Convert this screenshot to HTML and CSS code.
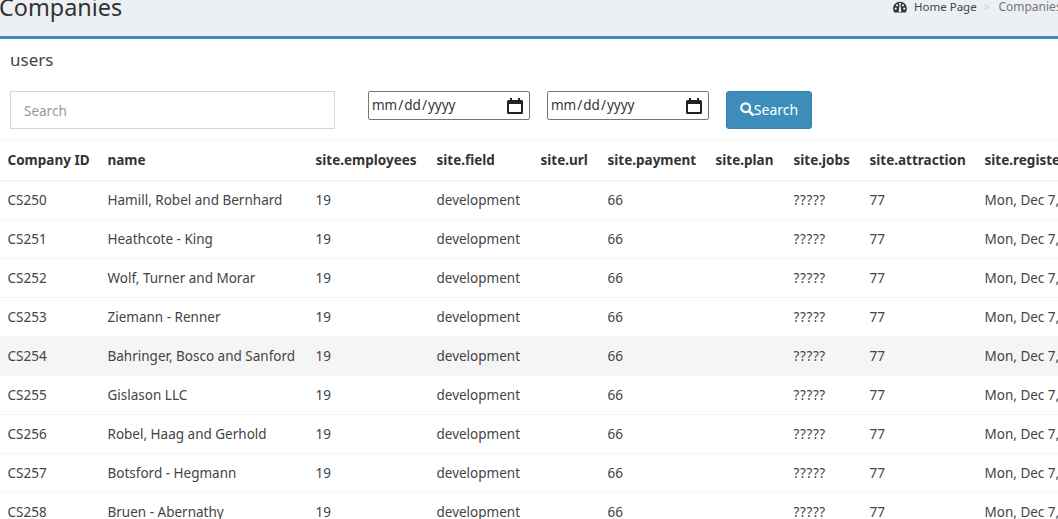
FILE: index.html
```html
<!DOCTYPE html>
<html lang="en">
<head>
    <meta charset="UTF-8">
    <meta name="viewport" content="width=device-width, initial-scale=1.0">
    <title>Companies</title>
    <link rel="stylesheet" href="styles.css">
</head>
<body>
    <header class="page-header">
        <h1 class="page-title">Companies</h1>
        <ol class="breadcrumb">
            <li class="crumb-link">
                <svg class="crumb-icon" viewBox="0 0 16 14" aria-hidden="true">
                    <path fill-rule="evenodd" d="M8 1C3.6 1 0 4.6 0 9c0 1.500.4 2.900 1.100 4 .2.300.5.500.8.500h12.200c.3 0 .6-.2.800-.5.700-1.100 1.100-2.500 1.100-4 0-4.400-3.600-8-8-8zM3 10.300a1.300 1.300 0 1 1 0-2.600 1.300 1.300 0 0 1 0 2.600zM4.600 6.300a1.300 1.300 0 1 1 0-2.600 1.300 1.300 0 0 1 0 2.600zM8 4.600a1.300 1.300 0 1 1 0-2.600 1.300 1.300 0 0 1 0 2.600zM13 10.300a1.300 1.300 0 1 1 0-2.600 1.300 1.300 0 0 1 0 2.600zM11.400 6.300a1.300 1.300 0 1 1 0-2.600 1.300 1.300 0 0 1 0 2.600zM9.500 11.200a1.600 1.600 0 1 1-2.800-.9L7.400 5h1.200l.7 5.300c.1.300.2.600.2.900z"/>
                </svg>
                Home Page
            </li>
            <li class="crumb-sep">&gt;</li>
            <li class="crumb-current">Companies</li>
        </ol>
    </header>

    <main class="box">
        <h3 class="box-title">users</h3>
        <form class="filters">
            <input class="search-input" type="text" placeholder="Search">
            <input class="date-input date-from" type="date">
            <input class="date-input date-to" type="date">
            <button class="search-btn" type="button">
                <svg class="search-icon" viewBox="0 0 14 14" aria-hidden="true">
                    <circle cx="5.700" cy="5.700" r="4.400" fill="none" stroke="#fff" stroke-width="2.200"/>
                    <path d="M9 9l3.800 3.800" stroke="#fff" stroke-width="2.600" stroke-linecap="round"/>
                </svg>Search
            </button>
        </form>

        <table class="data-table">
            <colgroup>
                <col class="c-id"><col class="c-name"><col class="c-emp"><col class="c-field"><col class="c-url">
                <col class="c-pay"><col class="c-plan"><col class="c-jobs"><col class="c-attr"><col class="c-reg">
            </colgroup>
            <thead>
                <tr>
                    <th>Company ID</th><th>name</th><th>site.employees</th><th>site.field</th><th>site.url</th>
                    <th>site.payment</th><th>site.plan</th><th>site.jobs</th><th>site.attraction</th><th>site.registered</th>
                </tr>
            </thead>
            <tbody>
                <tr><td>CS250</td><td>Hamill, Robel and Bernhard</td><td>19</td><td>development</td><td></td><td>66</td><td></td><td>?????</td><td>77</td><td>Mon, Dec 7, 2020</td></tr>
                <tr><td>CS251</td><td>Heathcote - King</td><td>19</td><td>development</td><td></td><td>66</td><td></td><td>?????</td><td>77</td><td>Mon, Dec 7, 2020</td></tr>
                <tr><td>CS252</td><td>Wolf, Turner and Morar</td><td>19</td><td>development</td><td></td><td>66</td><td></td><td>?????</td><td>77</td><td>Mon, Dec 7, 2020</td></tr>
                <tr><td>CS253</td><td>Ziemann - Renner</td><td>19</td><td>development</td><td></td><td>66</td><td></td><td>?????</td><td>77</td><td>Mon, Dec 7, 2020</td></tr>
                <tr class="is-hover"><td>CS254</td><td>Bahringer, Bosco and Sanford</td><td>19</td><td>development</td><td></td><td>66</td><td></td><td>?????</td><td>77</td><td>Mon, Dec 7, 2020</td></tr>
                <tr><td>CS255</td><td>Gislason LLC</td><td>19</td><td>development</td><td></td><td>66</td><td></td><td>?????</td><td>77</td><td>Mon, Dec 7, 2020</td></tr>
                <tr><td>CS256</td><td>Robel, Haag and Gerhold</td><td>19</td><td>development</td><td></td><td>66</td><td></td><td>?????</td><td>77</td><td>Mon, Dec 7, 2020</td></tr>
                <tr><td>CS257</td><td>Botsford - Hegmann</td><td>19</td><td>development</td><td></td><td>66</td><td></td><td>?????</td><td>77</td><td>Mon, Dec 7, 2020</td></tr>
                <tr><td>CS258</td><td>Bruen - Abernathy</td><td>19</td><td>development</td><td></td><td>66</td><td></td><td>?????</td><td>77</td><td>Mon, Dec 7, 2020</td></tr>
            </tbody>
        </table>
    </main>
</body>
</html>
```

FILE: styles.css
```css
html,
body {
    height: 100%;
    overflow: hidden;
}
body {
    margin: 0;
    background: #fff;
    color: #333;
    font-family: "Noto Sans", "Open Sans", sans-serif;
    font-size: 13.5px;
}
.page-header {
    display: flex;
    height: 36px;
    background: #ecf0f5;
    border-bottom: 3px solid #3c8dbc;
    overflow: hidden;
}
.page-title {
    margin: -8px 0 0 -1px;
    font-size: 23.4px;
    font-weight: 400;
    line-height: 30px;
    color: #333;
}
.breadcrumb {
    display: flex;
    flex: 0 0 165px;
    gap: 7px;
    margin: 0 0 0 auto;
    padding: 0;
    list-style: none;
    font-size: 11.5px;
    line-height: 14px;
    white-space: nowrap;
    overflow: hidden;
}
.crumb-link {
    display: flex;
    align-items: center;
    gap: 7px;
    height: 14px;
    color: #444;
}
.crumb-icon {
    width: 14px;
    height: 12px;
    fill: #333;
}
.crumb-sep {
    color: #ccc;
    font-size: 10px;
}
.crumb-current {
    margin-left: 2px;
    font-size: 12px;
    color: #777;
}
.box-title {
    margin: 0;
    padding: 9px 10px 0;
    height: 43px;
    font-size: 17px;
    font-weight: 400;
    line-height: 23px;
    color: #444;
}
.filters {
    display: flex;
    align-items: flex-start;
    height: 49px;
    margin: 0;
    padding-left: 10px;
}
.search-input {
    box-sizing: border-box;
    width: 325px;
    height: 38px;
    padding: 8px 13px 6px;
    border: 1px solid #d2d6de;
    font: inherit;
    color: #555;
}
.search-input::placeholder {
    color: #999;
}
.date-input {
    box-sizing: border-box;
    width: 162px;
    height: 29px;
    padding: 0 2px 2px;
    border: 1px solid #767676;
    border-radius: 2px;
    font-family: inherit;
    font-size: 13.5px;
    color: #333;
}
.date-input::-webkit-calendar-picker-indicator {
    width: 16px;
    height: 16px;
    margin: 2px 4px 0 0;
    padding: 0;
    background: url("data:image/svg+xml,%3Csvg xmlns='http://www.w3.org/2000/svg' viewBox='0 0 16 16'%3E%3Cpath d='M3 0h2v2h6V0h2v2h1.500A1.500 1.500 0 0 1 16 3.500v11a1.500 1.500 0 0 1-1.500 1.500h-13A1.500 1.500 0 0 1 0 14.500v-11A1.500 1.500 0 0 1 1.500 2H3zM2 6v8h12V6z' fill='%23222'/%3E%3C/svg%3E") center / 16px 16px no-repeat;
}
.date-from {
    margin-left: 33px;
}
.date-to {
    margin-left: 17px;
}
.search-btn {
    display: flex;
    align-items: center;
    justify-content: center;
    box-sizing: border-box;
    width: 86px;
    height: 38px;
    margin-left: 17px;
    padding: 0 0 2px;
    border: 1px solid #367fa9;
    border-radius: 3px;
    background: #3c8dbc;
    color: #fff;
    font: inherit;
    font-size: 14px;
}
.search-icon {
    width: 14px;
    height: 14px;
}
.data-table {
    width: 1258px;
    border-collapse: collapse;
    table-layout: fixed;
}
.c-id { width: 100px; }
.c-name { width: 208px; }
.c-emp { width: 121px; }
.c-field { width: 104px; }
.c-url { width: 67px; }
.c-pay { width: 108px; }
.c-plan { width: 78px; }
.c-jobs { width: 76px; }
.c-attr { width: 115px; }
.c-reg { width: 281px; }
.data-table th,
.data-table td {
    height: 39px;
    box-sizing: border-box;
    padding: 0 8px 0 7.5px;
    text-align: left;
    white-space: nowrap;
    overflow: hidden;
    border-top: 1px solid #f4f4f4;
}
.data-table th {
    height: 40px;
    padding-bottom: 1px;
    font-weight: 700;
    color: #333;
    border-bottom: 2px solid #f4f4f4;
}
.data-table td {
    color: #444;
}
.data-table td:nth-child(8) {
    letter-spacing: 0.6px;
}
.is-hover td {
    background: #f5f5f5;
}
```
